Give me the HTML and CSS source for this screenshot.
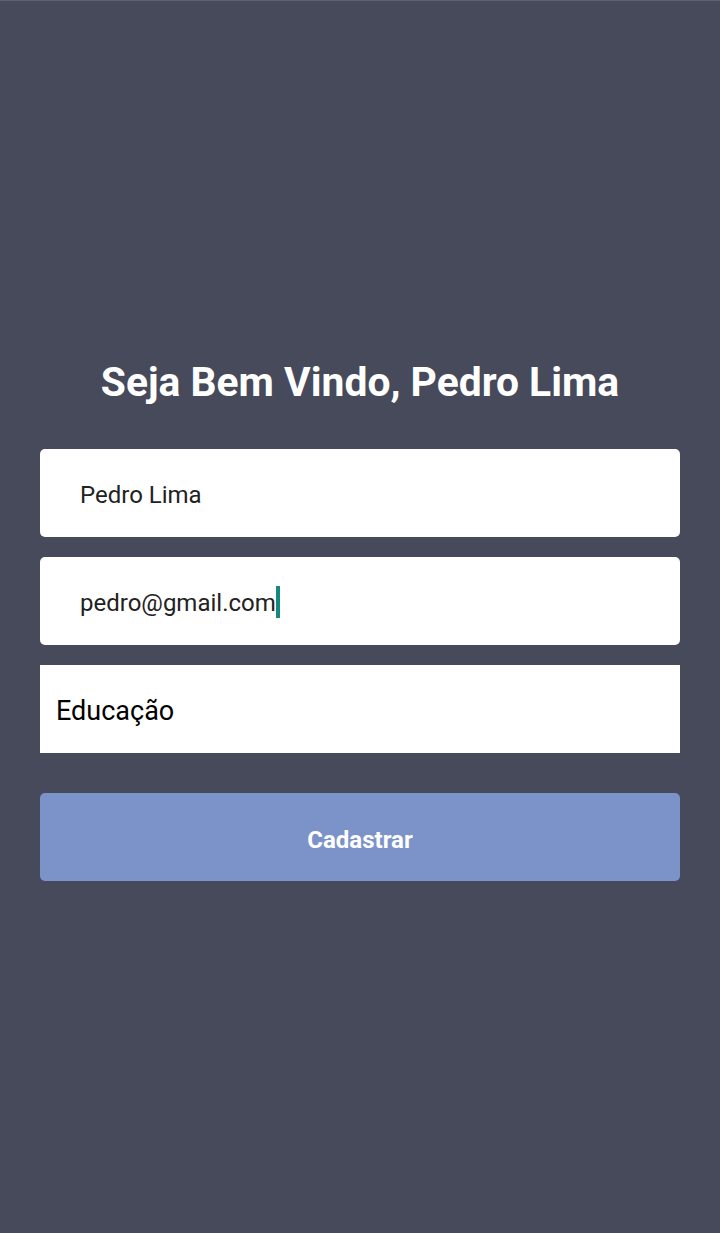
FILE: index.html
```html
<!DOCTYPE html>
<html lang="pt">
<head>
<meta charset="utf-8">
<link rel="stylesheet" href="styles.css">
</head>
<body>
<div class="screen">
  <main class="form">
    <h1 class="title">Seja Bem Vindo, Pedro Lima</h1>
    <div class="field"><span class="value">Pedro Lima</span></div>
    <div class="field"><span class="value">pedro@gmail.com</span><span class="cursor"></span></div>
    <div class="select"><span class="select-value">Educação</span></div>
    <button class="submit">Cadastrar</button>
  </main>
</div>
</body>
</html>
```

FILE: styles.css
```css
html, body {
  margin: 0;
  padding: 0;
}
body {
  background: #464a5a;
  font-family: Roboto, "Liberation Sans", sans-serif;
}
.screen {
  width: 720px;
  height: 1233px;
  box-sizing: border-box;
  border-top: 1px solid #5d6070;
  background: #464a5a;
  display: flex;
  flex-direction: column;
}
.form {
  margin-top: 356px;
  padding: 0 40px;
  display: flex;
  flex-direction: column;
}
.title {
  margin: 0 0 42px;
  color: #ffffff;
  font-size: 40.8px;
  font-weight: 700;
  text-align: center;
  line-height: 50px;
}
.field {
  height: 88px;
  background: #ffffff;
  border-radius: 5px;
  display: flex;
  align-items: center;
  padding-left: 40px;
  margin-bottom: 20px;
}
.value {
  font-size: 24px;
  color: #222222;
  padding-top: 3px;
}
.cursor {
  width: 4px;
  height: 32px;
  background: #14897c;
  margin-left: 0;
  margin-top: 2px;
}
.select {
  height: 88px;
  background: #ffffff;
  display: flex;
  align-items: center;
  padding-left: 16px;
  margin-bottom: 40px;
}
.select-value {
  font-size: 27px;
  color: #000000;
  padding-top: 3px;
}
.submit {
  height: 88px;
  border: none;
  border-radius: 5px;
  background: #7b93c9;
  color: #ffffff;
  font-family: Roboto, "Liberation Sans", sans-serif;
  font-size: 24px;
  font-weight: 700;
  padding: 5px 0 0;
}
```
